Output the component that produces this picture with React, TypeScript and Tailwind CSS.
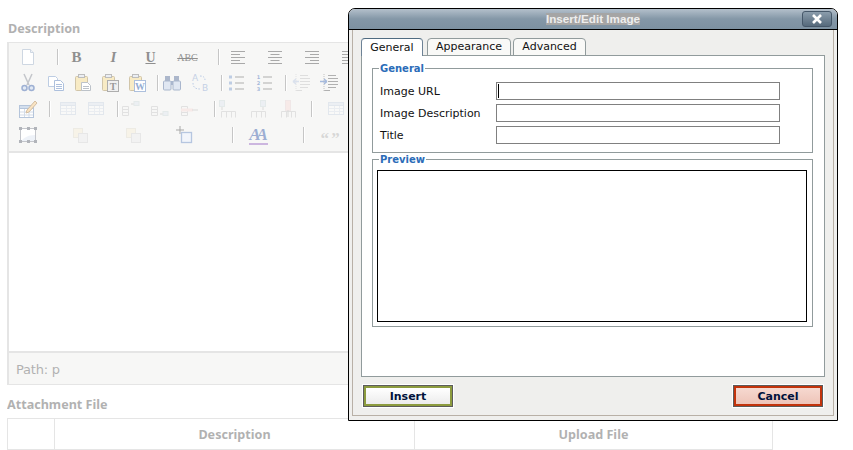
import type { ReactNode } from "react";

const verdana = "font-['DejaVu_Sans',sans-serif]";

function Svg({ children, dim }: { children: ReactNode; dim?: boolean }) {
  return (
    <svg width="20" height="20" viewBox="0 0 20 20" fill="none" className={dim ? "opacity-35" : ""}>
      {children}
    </svg>
  );
}

function Cell({ w, children }: { w: string; children: ReactNode }) {
  return <div className={`${w} h-full shrink-0 flex items-center justify-center`}>{children}</div>;
}

function Sep({ ml = "" }: { ml?: string }) {
  return <div className={`${ml} w-px h-[16px] shrink-0 bg-[#8f8f8f] shadow-[1px_0_0_#fff]`} />;
}

const NewDoc = () => (
  <Svg>
    <path d="M4.5 2.5h8l3 3v12h-11z" fill="#fff" stroke="#9fb0c6" />
    <path d="M12.5 2.5v3h3" fill="#e3e9f2" stroke="#9fb0c6" />
  </Svg>
);

const Cut = () => (
  <Svg>
    <path d="M6 1l5 11M14 1L9 12" stroke="#8a8f98" strokeWidth="1.5" />
    <circle cx="6.5" cy="15" r="2.5" fill="#c6d4ea" stroke="#3f64a8" strokeWidth="1.5" />
    <circle cx="13.5" cy="15" r="2.5" fill="#c6d4ea" stroke="#3f64a8" strokeWidth="1.5" />
  </Svg>
);

const Copy = () => (
  <Svg>
    <path d="M2.5 3.5h7l2 2v8h-9z" fill="#fff" stroke="#7e9cc9" />
    <path d="M8.5 7.5h6l3 3v7h-9z" fill="#fff" stroke="#5d83bd" />
    <path d="M10 11.5h6M10 13.5h6M10 15.5h6" stroke="#5d83bd" />
  </Svg>
);

const Paste = ({ extra }: { extra?: ReactNode }) => (
  <Svg>
    <rect x="2.5" y="3.5" width="12" height="14" rx="1" fill="#f3d98d" stroke="#a58c55" />
    <rect x="5.5" y="1.5" width="6" height="3" fill="#d8dee8" stroke="#7d7d7d" />
    {extra ?? (
      <>
        <path d="M8.5 9.5h6l3 3v5h-9z" fill="#fff" stroke="#7c8794" />
        <path d="M10 13.5h6M10 15.5h6" stroke="#7c8794" />
      </>
    )}
  </Svg>
);

const PasteText = () => (
  <Paste
    extra={
      <>
        <rect x="7.5" y="7.5" width="11" height="11" fill="#e3e3e3" stroke="#5f5f5f" />
        <text x="13" y="16.5" textAnchor="middle" fontSize="10" fontWeight="700" fontFamily="Liberation Serif" fill="#333">T</text>
      </>
    }
  />
);

const PasteWord = () => (
  <Paste
    extra={
      <>
        <rect x="7.5" y="7.5" width="11" height="11" fill="#fff" stroke="#5d83bd" />
        <text x="13" y="16.5" textAnchor="middle" fontSize="10" fontWeight="700" fontFamily="Liberation Serif" fill="#2f5ea8">W</text>
      </>
    }
  />
);

const Find = () => (
  <Svg>
    <rect x="3" y="3" width="5" height="5" fill="#5c7299" />
    <rect x="12" y="3" width="5" height="5" fill="#5c7299" />
    <rect x="1.5" y="8" width="7.5" height="9" rx="1" fill="#c2d0e6" stroke="#56709c" />
    <rect x="11" y="8" width="7.5" height="9" rx="1" fill="#c2d0e6" stroke="#56709c" />
    <rect x="9" y="8" width="2" height="4" fill="#56709c" />
  </Svg>
);

const Replace = () => (
  <Svg>
    <text x="5" y="8" textAnchor="middle" fontSize="9" fontFamily="DejaVu Sans" fill="#8aa3cc">A</text>
    <text x="15" y="18" textAnchor="middle" fontSize="9" fontFamily="DejaVu Sans" fill="#8aa3cc">B</text>
    <path d="M3 10c0 4 2 6 7 6M10 3c3 0 5 1 5 4" stroke="#7b9cd0" strokeDasharray="1.5 1.5" />
  </Svg>
);

const UList = () => (
  <Svg>
    {[4, 10, 16].map((y) => (
      <g key={y}>
        <rect x="3" y={y - 1.5} width="3" height="3" fill="#7f9ccb" />
        <path d={`M9 ${y}h9`} stroke="#777" strokeWidth="1.2" />
      </g>
    ))}
  </Svg>
);

const OList = () => (
  <Svg>
    {[1, 2, 3].map((n) => (
      <g key={n}>
        <text x="4.5" y={n * 6} textAnchor="middle" fontSize="5" fontWeight="700" fontFamily="DejaVu Sans" fill="#4a72b5">{n}</text>
        <path d={`M9 ${n * 6 - 2}h9`} stroke="#777" strokeWidth="1.2" />
      </g>
    ))}
  </Svg>
);

const Indent = ({ out }: { out?: boolean }) => (
  <Svg dim={out}>
    <path d="M9 2.5h8M9 5.5h10M9 8.5h10M9 11.5h10M9 14.5h8M5 17.5h6" stroke="#666" />
    <path d="M5 1v18" stroke="#888" strokeDasharray="1 1" />
    {out ? (
      <path d="M8 8.5H2M2 8.5l3-2.500M2 8.5l3 2.500" stroke="#4f78bd" strokeWidth="1.4" />
    ) : (
      <path d="M1 8.5h7M8 8.500l-3-2.500M8 8.500l-3 2.500" stroke="#4f78bd" strokeWidth="1.4" />
    )}
  </Svg>
);

const Grid = ({ dim, w = 15 }: { dim?: boolean; w?: number }) => (
  <Svg dim={dim}>
    <rect x="2.500" y="3.500" width={w} height="12" fill="#fff" stroke="#7e98bd" />
    <rect x="2.500" y="3.500" width={w} height="3" fill="#b5c7df" stroke="#7e98bd" />
    <path d={`M3 9.500h${w - 1}M3 12.500h${w - 1}M8.500 7v8M13.500 7v8`} stroke="#a9bbd3" />
  </Svg>
);

const TableEdit = () => (
  <Svg>
    <rect x="1.500" y="6.500" width="14" height="12" fill="#fff" stroke="#6e8db8" />
    <rect x="1.500" y="6.500" width="14" height="3" fill="#a9c0de" stroke="#6e8db8" />
    <path d="M2 13h13M2 16h13M6.500 10v8M11 10v8" stroke="#a9bbd3" />
    <path d="M9 11l8-9 2 2-8 9-3 1z" fill="#f4c987" stroke="#a87f4a" />
  </Svg>
);

const RowMove = ({ kind }: { kind: number }) => (
  <Svg dim>
    <path d="M1.500 7.500h6v3h-6zM1.500 10.500h6v3h-6zM1.500 13.500h6v3h-6z" stroke="#777" />
    {kind === 0 && <path d="M10 5h4" stroke="#555" />}
    {kind === 0 && <rect x="13" y="2.500" width="5" height="4" fill="#b5c7df" stroke="#8aa" />}
    {kind === 1 && <path d="M10 15h4" stroke="#555" />}
    {kind === 1 && <rect x="13" y="12.500" width="5" height="4" fill="#b5c7df" stroke="#8aa" />}
    {kind === 2 && <rect x="1" y="9.500" width="12" height="3" fill="#f0a8a0" />}
    {kind === 2 && <path d="M12 11h6" stroke="#555" />}
  </Svg>
);

const ColMove = ({ kind }: { kind: number }) => (
  <Svg dim>
    <path d="M3.500 12.500h14M3.500 12.500v6M8.500 12.500v6M13.500 12.500v6M17.500 12.500v6" stroke="#777" />
    {kind < 2 ? (
      <rect x={kind === 0 ? 1.5 : 12.5} y="1.500" width="5" height="6" fill="#b5c7df" stroke="#8aa" />
    ) : (
      <rect x="7.500" y="1.500" width="5" height="10" fill="#f0a8a0" stroke="#c99" />
    )}
    <path d={kind === 0 ? "M4 8v3" : kind === 1 ? "M15 8v3" : "M10 11v7"} stroke="#555" />
  </Svg>
);

const Frame = () => (
  <Svg>
    <rect x="2.500" y="3.500" width="15" height="13" fill="#dfe6f3" stroke="#8b8f98" />
    <path d="M3 4h14v6C10 10 6 13 3 16z" fill="#fff" />
    {[
      [1, 2],
      [9, 2],
      [16, 2],
      [1, 15],
      [9, 15],
      [16, 15],
    ].map(([x, y]) => (
      <rect key={`${x}-${y}`} x={x} y={y} width="3" height="3" fill="#666c77" />
    ))}
  </Svg>
);

const Layer = () => (
  <Svg dim>
    <rect x="3.500" y="3.500" width="9" height="9" fill="#f2dea0" stroke="#b9b08c" />
    <rect x="8.500" y="8.500" width="9" height="9" fill="#d8d8d8" stroke="#999" />
  </Svg>
);

const Absolute = () => (
  <Svg>
    <path d="M5 1v8M1 5h8" stroke="#555" />
    <rect x="6.500" y="7.500" width="10" height="10" fill="#e6edf8" stroke="#6f8fc2" strokeWidth="1.300" />
  </Svg>
);

function Row({ className = "", children }: { className?: string; children: ReactNode }) {
  return <div className={`h-[26px] flex items-center ${className}`}>{children}</div>;
}

function Toolbar() {
  return (
    <div className="h-[110px] pt-px bg-[#f0f0ee] border-b-2 border-[#cccccc] overflow-hidden">
      <Row>
        <Cell w="w-[48px]">
          <div className="-ml-[10px]"><NewDoc /></div>
        </Cell>
        <Sep />
        <Cell w="w-[37px]"><span className="font-['Liberation_Serif',serif] font-bold text-[15px] text-[#222222]">B</span></Cell>
        <Cell w="w-[37px]"><span className="font-['Liberation_Serif',serif] font-bold italic text-[15px] text-[#222222]">I</span></Cell>
        <Cell w="w-[37px]"><span className="font-['Liberation_Serif',serif] font-bold underline text-[14px] text-[#222222]">U</span></Cell>
        <Cell w="w-[37px]"><span className="font-['Liberation_Serif',serif] line-through text-[10px] text-[#222222]">ABC</span></Cell>
        <Sep ml="ml-[12px]" />
        {["left", "center", "right", "full"].map((k, i) => (
          <Cell key={k} w="w-[37px]">
            <Svg>
              {[3, 6, 9, 12, 15].map((y, j) => {
                const len = i === 3 || j % 2 === 0 ? 14 : 9;
                const x = i === 0 || i === 3 ? 3 : i === 1 ? 10 - len / 2 : 17 - len;
                return <path key={y} d={`M${x} ${y + 1.5}h${len}`} stroke="#555" />;
              })}
            </Svg>
          </Cell>
        ))}
      </Row>
      <Row className="pl-[5px]">
        <Cell w="w-[28px]"><Cut /></Cell>
        <Cell w="w-[27px]"><Copy /></Cell>
        <Cell w="w-[27px]"><Paste /></Cell>
        <Cell w="w-[27px]"><PasteText /></Cell>
        <Cell w="w-[28px]"><PasteWord /></Cell>
        <Sep ml="ml-[6px]" />
        <Cell w="w-[28px]"><Find /></Cell>
        <Cell w="w-[28px]"><Replace /></Cell>
        <Sep ml="ml-[7px]" />
        <Cell w="w-[28px]"><UList /></Cell>
        <Cell w="w-[28px]"><OList /></Cell>
        <Sep ml="ml-[7px]" />
        <Cell w="w-[29px]"><Indent out /></Cell>
        <Cell w="w-[28px]"><Indent /></Cell>
      </Row>
      <Row className="pl-[5px]">
        <Cell w="w-[28px]"><TableEdit /></Cell>
        <Sep ml="ml-[7px]" />
        <Cell w="w-[35px]"><Grid dim /></Cell>
        <Cell w="w-[22px]"><Grid dim /></Cell>
        <Sep ml="ml-[10px]" />
        <Cell w="w-[25px]"><RowMove kind={0} /></Cell>
        <Cell w="w-[34px]"><RowMove kind={1} /></Cell>
        <Cell w="w-[26px]"><RowMove kind={2} /></Cell>
        <Sep ml="ml-[11px]" />
        <Cell w="w-[26px]"><ColMove kind={0} /></Cell>
        <Cell w="w-[34px]"><ColMove kind={1} /></Cell>
        <Cell w="w-[26px]"><ColMove kind={2} /></Cell>
        <Sep ml="ml-[10px]" />
        <Cell w="w-[48px]"><Grid dim /></Cell>
      </Row>
      <Row className="pl-[5px]">
        <Cell w="w-[28px]"><Frame /></Cell>
        <Cell w="w-[76px]"><Layer /></Cell>
        <Cell w="w-[29px]"><Layer /></Cell>
        <Cell w="w-[76px]"><Absolute /></Cell>
        <Sep ml="ml-[9px]" />
        <Cell w="w-[51px]">
          <span className="font-['Liberation_Serif',serif] font-bold italic text-[17px] leading-none tracking-[-4px] pr-[4px] text-[#3d5fa8] border-b-2 border-[#9a6fc0]">AA</span>
        </Cell>
        <Sep ml="ml-[19px]" />
        <Cell w="w-[51px]">
          <span className="font-['Liberation_Serif',serif] font-bold text-[17px] tracking-[-1px] translate-y-[4px] text-[#b0b0b0]">“ ”</span>
        </Cell>
      </Row>
    </div>
  );
}

function Editor() {
  return (
    <div className="h-[343px] w-[766px] border-x-2 border-y border-[#cccccc] flex flex-col">
      <Toolbar />
      <div className="h-[198px] bg-white" />
      <div className="flex-1 flex items-center px-[7px] pt-[3px] bg-[#f0f0ee] border-t-2 border-[#cccccc] text-[13px] text-[#666666] font-['DejaVu_Sans',sans-serif] tracking-[-0.2px]">
        Path: p
      </div>
    </div>
  );
}

function Page() {
  const heading = "font-['Noto_Sans',sans-serif] font-bold text-[12.6px] leading-[16px] text-[#666666]";
  return (
    <div className="pl-[7px] pt-[21px] opacity-50">
      <div className={`pl-px ${heading}`}>Description</div>
      <div className="mt-[5px]">
        <Editor />
      </div>
      <div className={`mt-[12px] ${heading}`}>Attachment File</div>
      <div className="mt-[5px] w-[766px] h-[32px] grid grid-cols-[46px_361px_1fr] border border-[#cccccc]">
        <div />
        <div className={`${heading} pt-[2px] border-x border-[#cccccc] flex items-center justify-center`}>Description</div>
        <div className={`${heading} pt-[2px] flex items-center justify-center`}>Upload File</div>
      </div>
    </div>
  );
}

function Tab({ active, w, children }: { active?: boolean; w: string; children: ReactNode }) {
  return (
    <div
      className={`${w} h-[18px] -mb-px pt-px rounded-t-[4px] flex items-center justify-center border-x border-t ${
        active
          ? "relative bg-white border-[#6d8296] border-t-[#4f6b80] border-b-0"
          : "bg-[#f9f9f7] border-[#919b9c] border-b border-b-[#919b9c]"
      }`}
    >
      {children}
    </div>
  );
}

function Field({ label, caret }: { label: string; caret?: boolean }) {
  return (
    <div className="flex items-center h-[18px]">
      <label className="w-[116px] shrink-0 pt-[2px]">{label}</label>
      <div className="w-[284px] h-[18px] border border-[#808080] bg-white flex items-center pl-[1px]">
        {caret && <div className="w-px h-[14px] bg-black" />}
      </div>
    </div>
  );
}

function Legend({ ml, children }: { ml: string; children: ReactNode }) {
  return <legend className={`${ml} px-px text-[10px] leading-[13px] font-bold text-[#2b6cb8]`}>{children}</legend>;
}

function DialogButton({ kind, children }: { kind: "ok" | "cancel"; children: ReactNode }) {
  const tone =
    kind === "ok"
      ? "border-[#8c9b3e] from-[#ffffff] to-[#ececec]"
      : "border-[#c2330c] from-[#f6d9d0] to-[#eec4b8]";
  return (
    <button
      className={`${tone} w-[88px] h-[20px] pt-px border-2 bg-gradient-to-b outline outline-1 outline-[#5c5c5c] shadow-[0_0_0_2px_#ffffff] text-[11px] font-bold text-[#00123c] ${verdana}`}
    >
      {children}
    </button>
  );
}

function Dialog() {
  return (
    <div className={`absolute left-[348px] top-[8px] w-[490px] h-[413px] flex flex-col bg-[#efefed] border border-black rounded-t-[7px] text-[11px] text-[#111111] ${verdana}`}>
      <div className="relative h-[21px] shrink-0 rounded-t-[6px] border-b border-black bg-gradient-to-b from-[#b4c0cb] via-[#8497a7] to-[#7d91a1] flex items-center justify-center">
        <span className="bg-[#a5a5a5] h-[12px] leading-[12px] text-[11.7px] font-bold text-[#eeeeee] font-['Liberation_Sans',sans-serif]">
          Insert/Edit Image
        </span>
        <button className="absolute right-[5px] top-[2px] w-[30px] h-[16px] rounded-[3px] border border-[#46586a] bg-gradient-to-b from-[#8b9dac] to-[#566a7c] flex items-center justify-center">
          <svg width="10" height="10" viewBox="0 0 10 10">
            <path d="M1 1l8 8M9 1l-8 8" stroke="#ffffff" strokeWidth="2.600" />
          </svg>
        </button>
      </div>
      <div className="flex-1 px-[3px] pb-[4px]">
        <div className="h-full flex flex-col border-x border-b border-[#b8b0a6] pl-[8px] pr-[8px] pt-[8px]">
          <div className="flex items-end gap-[4px] h-[17px]">
            <Tab active w="w-[62px]">General</Tab>
            <div className="flex gap-[2px]">
              <Tab w="w-[84px]">Appearance</Tab>
              <Tab w="w-[73px]">Advanced</Tab>
            </div>
          </div>
          <div className="h-[322px] bg-white border border-[#919b9c] pl-[10px] pr-[11px] pt-[6px]">
            <fieldset className="border border-[#919b9c] px-[7px] pt-[7px] pb-[8px]">
              <Legend ml="-ml-px">General</Legend>
              <div className="flex flex-col gap-[4px]">
                <Field label="Image URL" caret />
                <Field label="Image Description" />
                <Field label="Title" />
              </div>
            </fieldset>
            <fieldset className="border border-[#919b9c] px-[4px] pt-[4px] pb-[4px]">
              <Legend ml="ml-[2px]">Preview</Legend>
              <div className="w-[430px] h-[152px] border border-black bg-white" />
            </fieldset>
          </div>
          <div className="flex justify-between pl-[3px] pr-[3px] pt-[9px]">
            <DialogButton kind="ok">Insert</DialogButton>
            <DialogButton kind="cancel">Cancel</DialogButton>
          </div>
        </div>
      </div>
    </div>
  );
}

export default function App() {
  return (
    <div className="relative w-[853px] h-[450px] overflow-hidden bg-white">
      <Page />
      <Dialog />
    </div>
  );
}
